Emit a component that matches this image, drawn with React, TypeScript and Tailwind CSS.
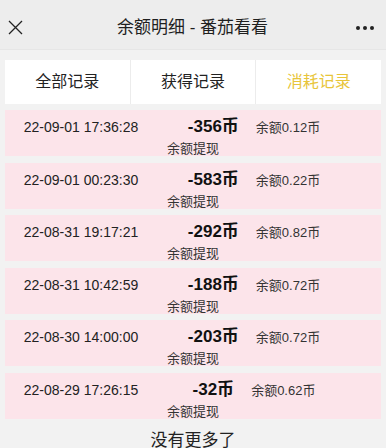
const records = [
  { time: "22-09-01 17:36:28", amount: "-356币", balance: "余额0.12币" },
  { time: "22-09-01 00:23:30", amount: "-583币", balance: "余额0.22币" },
  { time: "22-08-31 19:17:21", amount: "-292币", balance: "余额0.82币" },
  { time: "22-08-31 10:42:59", amount: "-188币", balance: "余额0.72币" },
  { time: "22-08-30 14:00:00", amount: "-203币", balance: "余额0.72币" },
  { time: "22-08-29 17:26:15", amount: "-32币", balance: "余额0.62币" },
]

const tabs = ["全部记录", "获得记录", "消耗记录"]

const App = () => {
  return (
    <div
      className="w-[386px] h-[448px] overflow-hidden bg-[#f2f2f2] text-[#1f1f1f]"
      style={{ fontFamily: '"Liberation Sans", "Noto Sans CJK SC", sans-serif' }}
    >
      <div className="h-[50px] bg-[#ededed] flex items-center justify-between px-[8px] border-b border-[#e6e6e6]">
        <svg width="15" height="15" viewBox="0 0 15 15" className="mt-[6px]">
          <path d="M1 1 L14 14 M14 1 L1 14" stroke="#222" strokeWidth="1.3" fill="none" />
        </svg>
        <p className="text-[17px] mt-[6px] ml-[6px]">余额明细 - 番茄看看</p>
        <div className="flex gap-[3px] mt-[6px] mr-[4px]">
          <span className="w-[4px] h-[4px] rounded-full bg-[#222]" />
          <span className="w-[4px] h-[4px] rounded-full bg-[#222]" />
          <span className="w-[4px] h-[4px] rounded-full bg-[#222]" />
        </div>
      </div>

      <div className="px-[5px]">
        <div className="mt-[10px] h-[44px] bg-white flex">
          {tabs.map((t, i) => (
            <div
              key={t}
              className={
                "flex-1 flex items-center justify-center text-[16px] " +
                (i < 2 ? "border-r border-[#ececec] " : "") +
                (i === 2 ? "text-[#e8c53a]" : "text-[#222]")
              }
            >
              {t}
            </div>
          ))}
        </div>

        <div className="mt-[6px] flex flex-col gap-[6.5px]">
          {records.map((r) => (
            <div key={r.time} className="h-[46px] bg-[#fce4ea] flex flex-col">
              <div className="flex items-baseline h-[28px] pt-[4px]">
                <div className="w-[152px] text-center text-[14px] text-[#222]">{r.time}</div>
                <div className="w-[194px] flex justify-center items-baseline gap-[17px]">
                  <span className="text-[17px] font-bold text-[#111]">{r.amount}</span>
                  <span className="text-[13px] text-[#333]">{r.balance}</span>
                </div>
              </div>
              <div className="text-center text-[13px] text-[#333] leading-[16px] mt-[3px]">余额提现</div>
            </div>
          ))}
        </div>

        <p className="text-center text-[17px] mt-[9px] text-[#222]">没有更多了</p>
      </div>
    </div>
  )
}

export default App
